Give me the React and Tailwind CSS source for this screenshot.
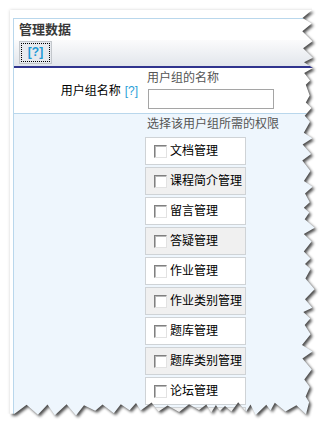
import React from 'react';

const perms = [
  '文档管理',
  '课程简介管理',
  '留言管理',
  '答疑管理',
  '作业管理',
  '作业类别管理',
  '题库管理',
  '题库类别管理',
  '论坛管理',
  '论坛类别管理',
];

// deterministic jagged edge for the "torn paper" effect
function makeTear() {
  let seed = 7;
  const rnd = () => {
    seed = (seed * 9301 + 49297) % 233280;
    return seed / 233280;
  };
  const right = [];
  let y = 10;
  let out = true;
  while (y < 404) {
    const x = out ? 309 + rnd() * 6 : 302 + rnd() * 4;
    right.push([x, y]);
    y += 4 + rnd() * 7;
    out = !out;
  }
  const bottom = [];
  let x = 306;
  out = true;
  while (x > 10) {
    const yy = out ? 410 + rnd() * 6 : 402 + rnd() * 5;
    bottom.push([x, yy]);
    x -= 4 + rnd() * 8;
    out = !out;
  }
  return { right, bottom };
}

const { right, bottom } = makeTear();
const pts = (arr) => arr.map(([a, b]) => `L${a.toFixed(1)} ${b.toFixed(1)}`).join(' ');
const lastB = bottom[bottom.length - 1];
const maskPoly = `M-5 -5 L${right[0][0].toFixed(1)} -5 ${pts(right)} ${pts(bottom)} L-5 ${lastB[1].toFixed(1)} Z`;
const shadowPoly = `M10 10 ${pts(right)} ${pts(bottom)} L10 ${lastB[1].toFixed(1)} Z`;

function Checkbox() {
  return (
    <span className="w-[13px] h-[13px] shrink-0 bg-white border border-t-[#808080] border-l-[#808080] border-r-[#e2e2e2] border-b-[#e2e2e2] shadow-[inset_1px_1px_0_#b8b8b8]" />
  );
}

export default function App() {
  return (
    <div className="relative w-[333px] h-[432px] bg-white overflow-hidden text-[12px] leading-[15px] font-['Liberation_Sans','Noto_Sans_CJK_SC',sans-serif]">
      <div className="ml-[10px] mt-[10px] w-[320px] h-[420px] bg-white pl-[3px] pt-[8px] shadow-[0_0_3px_rgba(0,0,0,0.18)]">
        <div className="h-full border border-[#b9d7ec] flex flex-col overflow-hidden">
          {/* title */}
          <div className="shrink-0 h-[21px] px-[5px] pt-[4px] font-bold text-[#3a3a3a] text-[13px] leading-[14px]">
            管理数据
          </div>

          {/* toolbar */}
          <div className="shrink-0 h-[26px] px-[5px] pt-[1px] bg-gradient-to-b from-[#fbfbfc] to-[#e2e6ec]">
            <div className="w-[33px] h-[23px] border border-[#c3c7cc] bg-[#e6e9ee] p-[1px]">
              <div className="h-full border border-dotted border-black flex items-center justify-center text-[#1e9ad6] font-bold">
                [?]
              </div>
            </div>
          </div>
          <div className="shrink-0 h-[2px] bg-[#30348e]" />

          {/* name row */}
          <div className="shrink-0 grid grid-cols-[128px_1fr] border-b border-[#b9d7ec] bg-white">
            <div className="flex items-center justify-end pr-[4px] pt-[1px] text-black">
              用户组名称
              <span className="ml-[4px] text-[#2aa0d8]">[?]</span>
            </div>
            <div className="pt-[3px] pb-[4px]">
              <div className="ml-[5px] text-[#555]">用户组的名称</div>
              <input
                type="text"
                className="block ml-[6px] mt-[3px] w-[126px] h-[20px] border border-[#a5a5a5] bg-white outline-none"
              />
            </div>
          </div>

          {/* permissions row */}
          <div className="flex-1 shrink-0 grid grid-cols-[128px_1fr] bg-[#eef6fd]">
            <div />
            <div className="pt-[3px]">
              <div className="ml-[5px] text-[#555] whitespace-nowrap">选择该用户组所需的权限</div>
              <div className="ml-[3px] mt-[5px] flex flex-col gap-[2px]">
                {perms.map((p, i) => (
                  <div
                    key={p}
                    className={
                      i % 2 === 0
                        ? 'shrink-0 w-[101px] h-[28px] border border-[#cfd3d6] bg-white flex items-center pl-[8px] gap-[3px] text-black'
                        : 'shrink-0 w-[101px] h-[28px] border border-[#cfd3d6] bg-[#f0f0f0] flex items-center pl-[8px] gap-[3px] text-black'
                    }
                  >
                    <Checkbox />
                    <span className="whitespace-nowrap">{p}</span>
                  </div>
                ))}
              </div>
            </div>
          </div>
        </div>
      </div>

      {/* torn edge overlay */}
      <svg className="absolute inset-0 pointer-events-none" width="333" height="432">
        <defs>
          <filter id="tearBlur" x="-10%" y="-10%" width="120%" height="120%">
            <feGaussianBlur stdDeviation="1.6" />
          </filter>
          <clipPath id="tearOutside">
            <path clipRule="evenodd" d={`M-10 -10 H400 V500 H-10 Z ${maskPoly}`} />
          </clipPath>
        </defs>
        <path fillRule="evenodd" fill="#ffffff" d={`M-10 -10 H400 V500 H-10 Z ${maskPoly}`} />
        <g clipPath="url(#tearOutside)">
          <path d={shadowPoly} fill="#000" opacity="0.7" filter="url(#tearBlur)" transform="translate(2 2)" />
        </g>
      </svg>
    </div>
  );
}
